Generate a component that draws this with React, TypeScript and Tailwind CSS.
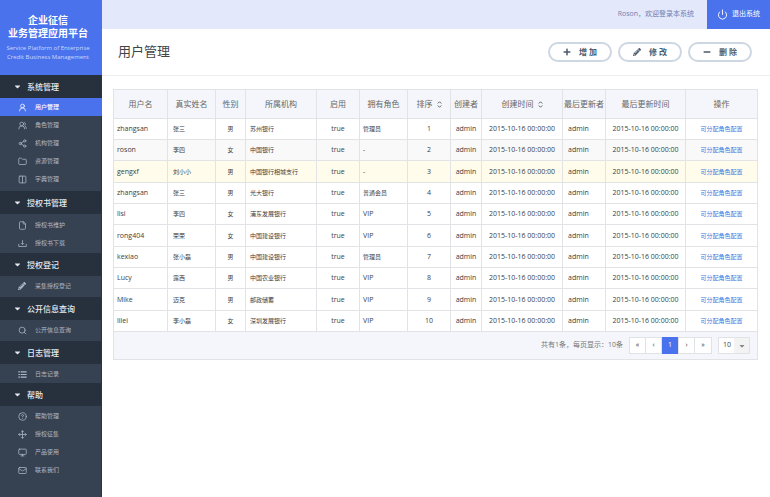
import type { ReactNode } from "react";
import {
  CircleHelp,
  Columns2,
  File,
  Folder,
  Mail,
  Monitor,
  Move,
  Power,
  Search,
  Share2,
  UserRound,
  UsersRound,
} from "lucide-react";
import { FaCaretDown, FaMinus, FaPencilAlt, FaPlus } from "react-icons/fa";

const iconClass = "h-[9px] w-[9px] shrink-0";

function DownloadIcon() {
  return (
    <svg viewBox="0 0 24 24" className={iconClass} fill="none" stroke="currentColor" strokeWidth="2">
      <path d="M2 13v7h20v-7M12 3v11M8 11l4 4 4-4" />
    </svg>
  );
}

function ListIcon() {
  return (
    <svg viewBox="0 0 24 24" className={iconClass} fill="none" stroke="currentColor" strokeWidth="3">
      <path d="M1 5h4M7 5h16M1 12h4M7 12h16M1 19h4M7 19h16" />
    </svg>
  );
}

function SortIcon() {
  return (
    <svg viewBox="0 0 10 14" className="h-[7px] w-[5px]" fill="none" stroke="currentColor" strokeWidth="2">
      <path d="M1.500 5L5 1.500 8.500 5M1.500 9L5 12.500 8.500 9" />
    </svg>
  );
}

type MenuItem = { label: string; icon: ReactNode; active?: boolean };

const sections: { title: string; spacing: string; items: MenuItem[] }[] = [
  {
    title: "系统管理",
    spacing: "pb-[3px]",
    items: [
      { label: "用户管理", icon: <UserRound className={iconClass} />, active: true },
      { label: "角色管理", icon: <UsersRound className={iconClass} /> },
      { label: "机构管理", icon: <Share2 className={iconClass} /> },
      { label: "资源管理", icon: <Folder className={iconClass} /> },
      { label: "字典管理", icon: <Columns2 className={iconClass} /> },
    ],
  },
  {
    title: "授权书管理",
    spacing: "pt-[2px] pb-px",
    items: [
      { label: "授权书维护", icon: <File className={iconClass} /> },
      { label: "授权书下载", icon: <DownloadIcon /> },
    ],
  },
  {
    title: "授权登记",
    spacing: "pt-px pb-[2px]",
    items: [{ label: "采集授权登记", icon: <FaPencilAlt className="mr-px h-2 w-2 shrink-0" /> }],
  },
  {
    title: "公开信息查询",
    spacing: "pt-px pb-[2px]",
    items: [{ label: "公开信息查询", icon: <Search className={iconClass} /> }],
  },
  {
    title: "日志管理",
    spacing: "pt-px",
    items: [{ label: "日志记录", icon: <ListIcon /> }],
  },
  {
    title: "帮助",
    spacing: "pt-px",
    items: [
      { label: "帮助管理", icon: <CircleHelp className={iconClass} /> },
      { label: "授权征集", icon: <Move className={iconClass} /> },
      { label: "产品使用", icon: <Monitor className={iconClass} /> },
      { label: "联系我们", icon: <Mail className={iconClass} /> },
    ],
  },
];

const columns = [
  { label: "用户名", width: "w-[54px]" },
  { label: "真实姓名", width: "w-[48px]" },
  { label: "性别", width: "w-[30px]" },
  { label: "所属机构", width: "w-[71px]" },
  { label: "启用", width: "w-[43px]" },
  { label: "拥有角色", width: "w-[48px]" },
  { label: "排序", width: "w-[43px]", sortable: true },
  { label: "创建者", width: "w-[31px]" },
  { label: "创建时间", width: "w-[81px]", sortable: true },
  { label: "最后更新者", width: "w-[43px]" },
  { label: "最后更新时间", width: "w-[80px]" },
  { label: "操作", width: "w-[72px]" },
];

const users = [
  { account: "zhangsan", name: "张三", sex: "男", org: "苏州银行", role: "管理员" },
  { account: "roson", name: "李四", sex: "女", org: "中国银行", role: "-" },
  { account: "gengxf", name: "刘小小", sex: "男", org: "中国银行相城支行", role: "-" },
  { account: "zhangsan", name: "张三", sex: "男", org: "光大银行", role: "普通会员" },
  { account: "lisi", name: "李四", sex: "女", org: "浦东发展银行", role: "VIP" },
  { account: "rong404", name: "荣荣", sex: "女", org: "中国建设银行", role: "VIP" },
  { account: "kexiao", name: "张小磊", sex: "男", org: "中国建设银行", role: "管理员" },
  { account: "Lucy", name: "露西", sex: "男", org: "中国农业银行", role: "VIP" },
  { account: "Mike", name: "迈克", sex: "男", org: "邮政储蓄", role: "VIP" },
  { account: "lilei", name: "李小磊", sex: "女", org: "深圳发展银行", role: "VIP" },
];

const TIME = "2015-10-16 00:00:00";

function Sidebar() {
  return (
    <aside className="w-[102px] shrink-0 border-r border-[#2b3442] bg-[#364152]">
      <div className="-mr-px flex h-[75px] flex-col items-center bg-[#4a72ec] pt-[14px] pr-[6px] text-center whitespace-nowrap text-white">
        <h1 className="text-[10px] leading-[13px] font-bold">
          企业征信
          <br />
          业务管理应用平台
        </h1>
        <p className="mt-1 text-[6px] leading-[9px] text-[#cdd9fc]">
          Service Platform of Enterprise
          <br />
          Credit Business Management
        </p>
      </div>
      <nav>
        {sections.map((section) => (
          <section key={section.title}>
            <button
              type="button"
              className="flex h-[23px] w-full items-center gap-[5px] bg-[#27303d] pl-[13px] text-[8px] font-medium text-[#e6eaf0]"
            >
              <FaCaretDown className="h-[9px] w-[9px]" />
              {section.title}
            </button>
            <ul className={section.spacing}>
              {section.items.map((item) => (
                <li key={item.label}>
                  <a
                    href="#"
                    className={
                      item.active
                        ? "-mr-px flex h-[18px] items-center gap-2 bg-[#4a72ec] pl-[18px] text-[6px] font-medium text-white"
                        : "flex h-[18px] items-center gap-2 pl-[18px] text-[6px] text-[#aeb9c9]"
                    }
                  >
                    {item.icon}
                    {item.label}
                  </a>
                </li>
              ))}
            </ul>
          </section>
        ))}
      </nav>
    </aside>
  );
}

function ActionButton({ icon, label }: { icon: ReactNode; label: string }) {
  return (
    <button
      type="button"
      className="flex h-5 w-16 items-center justify-center gap-2 rounded-full border-2 border-[#cdd7e3] bg-white text-[8px] font-bold text-[#4d5a6c]"
    >
      {icon}
      {label}
    </button>
  );
}

function UserTable() {
  const cell = "border-r border-b border-[#e2e3e6] p-0";
  return (
    <table className="w-full table-fixed border-separate border-spacing-0 text-[7px] leading-[10px] whitespace-nowrap text-[#404040]">
      <thead>
        <tr className="h-[29px] bg-[#f4f6fb] text-[8px] text-[#666]">
          {columns.map((column) => (
            <th key={column.label} className={`${cell} ${column.width} font-normal`}>
              <span className="flex items-center justify-center gap-1">
                {column.label}
                {column.sortable && <SortIcon />}
              </span>
            </th>
          ))}
        </tr>
      </thead>
      <tbody>
        {users.map((user, index) => (
          <tr
            key={index}
            className="h-[21px] text-center nth-[2]:bg-[#f9f9f9] nth-[3]:bg-[#fffceb] nth-[3n]:h-[22px]"
          >
            <td className={`${cell} pl-[3px] text-left`}>{user.account}</td>
            <td className={`${cell} pl-[5px] text-left text-[6px]`}>{user.name}</td>
            <td className={`${cell} text-[6px]`}>{user.sex}</td>
            <td className={`${cell} pl-1 text-left text-[6px]`}>{user.org}</td>
            <td className={cell}>true</td>
            <td className={`${cell} pl-[3px] text-left ${/^[A-Z-]/.test(user.role) ? "" : "text-[6px]"}`}>
              {user.role}
            </td>
            <td className={cell}>{index + 1}</td>
            <td className={cell}>admin</td>
            <td className={cell}>{TIME}</td>
            <td className={`${cell} pl-[5px] text-left`}>admin</td>
            <td className={cell}>{TIME}</td>
            <td className={`${cell} text-[6px]`}>
              <a href="#" className="text-[#3a76dc]">
                可分配角色配置
              </a>
            </td>
          </tr>
        ))}
      </tbody>
    </table>
  );
}

function Pagination() {
  return (
    <footer className="flex h-7 items-center justify-end border-r border-b border-[#e2e3e6] bg-[#f4f6fb] pr-[7px] text-[7px] text-[#777]">
      <span>共有1条，每页显示：10条</span>
      <div className="ml-[6px] flex h-[17px] divide-x divide-[#e0e2e6] border border-[#e0e2e6] bg-white">
        {["«", "‹", "1", "›", "»"].map((page) => (
          <button
            key={page}
            type="button"
            className={
              page === "1"
                ? "-my-px w-[17px] bg-[#4a72ec] text-white"
                : "w-[16px] pb-px text-[#333]"
            }
          >
            {page}
          </button>
        ))}
      </div>
      <div className="relative ml-[6px]">
        <select
          aria-label="每页显示"
          defaultValue="10"
          className="block h-[17px] w-8 appearance-none border border-[#e0e2e6] bg-white pl-1 text-[7px] text-[#444]"
        >
          <option>10</option>
          <option>20</option>
          <option>50</option>
        </select>
        <span className="pointer-events-none absolute inset-y-px right-px flex w-[15px] items-center justify-center bg-[#f3f3f4] text-[#888]">
          <FaCaretDown className="h-2 w-2" />
        </span>
      </div>
    </footer>
  );
}

export default function App() {
  return (
    <div className="flex min-h-screen bg-white font-['Open_Sans','Noto_Sans_CJK_SC',sans-serif]">
      <Sidebar />
      <div className="min-w-0 flex-1">
        <header className="flex h-[29px] items-center justify-end bg-[#e3e9fa] text-[7px]">
          <span className="mr-[13px] text-[#7180b5]">Roson，欢迎登录本系统</span>
          <button
            type="button"
            className="flex h-full w-[63px] items-center justify-center gap-1 bg-[#4a72ec] text-white"
          >
            <Power className="h-[11px] w-[11px]" />
            退出系统
          </button>
        </header>
        <main>
          <div className="flex h-[47px] items-center justify-between border-b border-[#eeeeef] pr-[18px] pl-4">
            <h2 className="text-[13px] text-[#444]">用户管理</h2>
            <div className="flex gap-[6px]">
              <ActionButton icon={<FaPlus className="h-2 w-2" />} label="增 加" />
              <ActionButton icon={<FaPencilAlt className="h-2 w-2" />} label="修 改" />
              <ActionButton icon={<FaMinus className="h-2 w-2" />} label="删 除" />
            </div>
          </div>
          <div className="mt-[13px] mr-3 ml-[11px] border-t border-l border-[#e2e3e6]">
            <UserTable />
            <Pagination />
          </div>
        </main>
      </div>
    </div>
  );
}
